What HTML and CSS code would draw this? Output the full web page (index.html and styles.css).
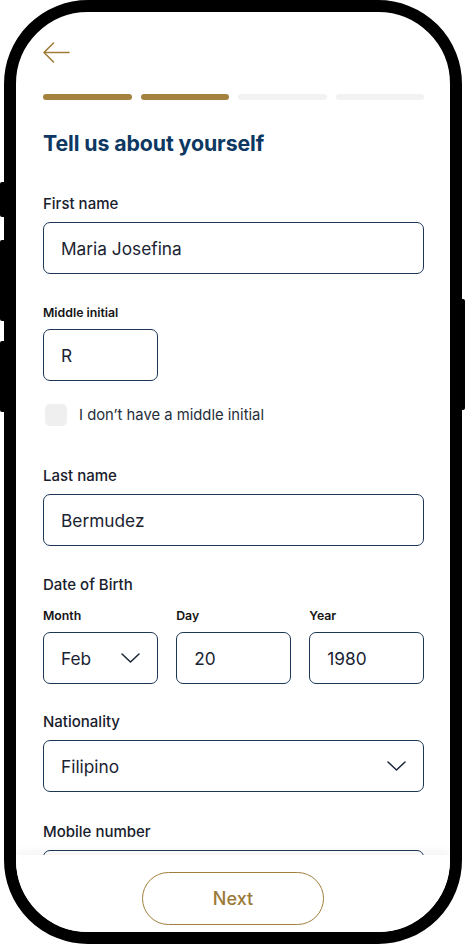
FILE: index.html
```html
<!DOCTYPE html>
<html lang="en">
<head>
<meta charset="utf-8">
<title>Tell us about yourself</title>
<link rel="stylesheet" href="styles.css">
</head>
<body>
<div class="phone">
  <span class="side-btn left b1"></span>
  <span class="side-btn left b2"></span>
  <span class="side-btn left b3"></span>
  <span class="side-btn right b4"></span>
  <div class="screen">
    <div class="content">
      <svg class="back" width="27" height="21" viewBox="0 0 27 21" fill="none" stroke="#9f7c38" stroke-width="1.6" stroke-linecap="round" stroke-linejoin="round">
        <path d="M26 10.5H1.5"/>
        <path d="M10.5 1L1 10.5L10.5 20"/>
      </svg>
      <div class="progress">
        <span class="step done"></span>
        <span class="step done"></span>
        <span class="step"></span>
        <span class="step"></span>
      </div>
      <h1 class="title">Tell us about yourself</h1>

      <label class="label first">First name</label>
      <div class="field">Maria Josefina</div>

      <label class="label small gap">Middle initial</label>
      <div class="field short">R</div>

      <div class="check-row">
        <span class="checkbox"></span>
        <span class="check-text">I don’t have a middle initial</span>
      </div>

      <label class="label gap-lg">Last name</label>
      <div class="field">Bermudez</div>

      <label class="label gap">Date of Birth</label>
      <div class="dob">
        <div class="dob-col">
          <label class="label small">Month</label>
          <div class="field select">Feb
            <svg class="chev" width="19" height="10" viewBox="0 0 19 10" fill="none" stroke="#1b2638" stroke-width="1.5" stroke-linecap="round" stroke-linejoin="round"><path d="M1 1l8.5 8 8.5-8"/></svg>
          </div>
        </div>
        <div class="dob-col">
          <label class="label small">Day</label>
          <div class="field">20</div>
        </div>
        <div class="dob-col">
          <label class="label small">Year</label>
          <div class="field">1980</div>
        </div>
      </div>

      <label class="label nat">Nationality</label>
      <div class="field select">Filipino
        <svg class="chev" width="19" height="10" viewBox="0 0 19 10" fill="none" stroke="#1b2638" stroke-width="1.5" stroke-linecap="round" stroke-linejoin="round"><path d="M1 1l8.5 8 8.5-8"/></svg>
      </div>

      <label class="label mob">Mobile number</label>
      <div class="field"></div>
    </div>
    <div class="footer">
      <button class="next">Next</button>
    </div>
  </div>
</div>
</body>
</html>
```

FILE: styles.css
```css
* { box-sizing: border-box; }
html, body {
  margin: 0;
  padding: 0;
  background: #fff;
  width: 466px;
  height: 945px;
  overflow: hidden;
  font-family: Inter, "Noto Sans", "Liberation Sans", sans-serif;
}
.phone {
  position: relative;
  margin-left: 4px;
  width: 458px;
  height: 944px;
  border: 12px solid #000;
  border-radius: 84px;
  background: #fff;
}
.side-btn {
  position: absolute;
  width: 8px;
  background: #000;
  border-radius: 2px;
}
.side-btn.left { left: -16px; }
.side-btn.right { right: -15px; }
.b1 { top: 170px; height: 35px; }
.b2 { top: 228px; height: 81px; }
.b3 { top: 329px; height: 71px; }
.b4 { top: 287px; height: 111px; }

.screen {
  width: 100%;
  height: 100%;
  border-radius: 72px;
  overflow: hidden;
  display: flex;
  flex-direction: column;
}
.content {
  flex: 1;
  overflow: hidden;
  padding: 30px 26px 0 27px;
  display: flex;
  flex-direction: column;
}
.back { display: block; flex: none; }
.progress {
  display: flex;
  gap: 9px;
  margin-top: 31px;
  flex: none;
}
.step {
  flex: 1;
  height: 6px;
  border-radius: 3px;
  background: #f2f2f2;
}
.step.done { background: #a4823f; }
.title {
  margin: 31px 0 0;
  font-size: 21.3px;
  line-height: 24px;
  font-weight: 700;
  color: #0d3862;
  letter-spacing: -0.1px;
}
.label {
  display: block;
  font-size: 15px;
  line-height: 18px;
  font-weight: 500;
  color: #18202c;
  margin-bottom: 9px;
}
.label.first { margin-top: 40px; }
.label.gap { margin-top: 30px; }
.label.gap-lg { margin-top: 41px; }
.label.nat { margin-top: 29px; }
.label.mob { margin-top: 31px; }
.label.small {
  font-size: 12.3px;
  line-height: 16px;
  font-weight: 600;
  margin-bottom: 8px;
  color: #141414;
}
.label.small.gap { margin-top: 31px; }
.field {
  flex: none;
  height: 52px;
  border: 1.2px solid #1d3857;
  border-radius: 7px;
  padding: 0 17px;
  display: flex;
  align-items: center;
  font-size: 17.3px;
  color: #1a2332;
}
.field.short { width: 115px; }
.field.select { justify-content: space-between; padding-right: 17px; }
.chev { display: block; }
.check-row {
  display: flex;
  align-items: center;
  gap: 12px;
  margin-top: 23px;
  padding-left: 2px;
}
.checkbox {
  width: 22px;
  height: 22px;
  border-radius: 5px;
  background: #efefef;
}
.check-text {
  font-size: 14.8px;
  color: #262e3b;
}
.dob {
  display: grid;
  grid-template-columns: 1fr 1fr 1fr;
  column-gap: 18.5px;
  margin-top: 5px;
}
.dob-col .label.small { margin-bottom: 8px; }
.footer {
  flex: none;
  height: 77px;
  background: #fff;
  box-shadow: 0 -3px 10px rgba(0, 0, 0, 0.05);
  display: flex;
  justify-content: center;
  padding-top: 17px;
  position: relative;
}
.next {
  width: 182px;
  height: 53px;
  border: 1.5px solid #a07e3c;
  border-radius: 27px;
  background: #fff;
  color: #9c7a37;
  font-family: Inter, "Noto Sans", sans-serif;
  font-size: 18px;
  font-weight: 500;
}
```
